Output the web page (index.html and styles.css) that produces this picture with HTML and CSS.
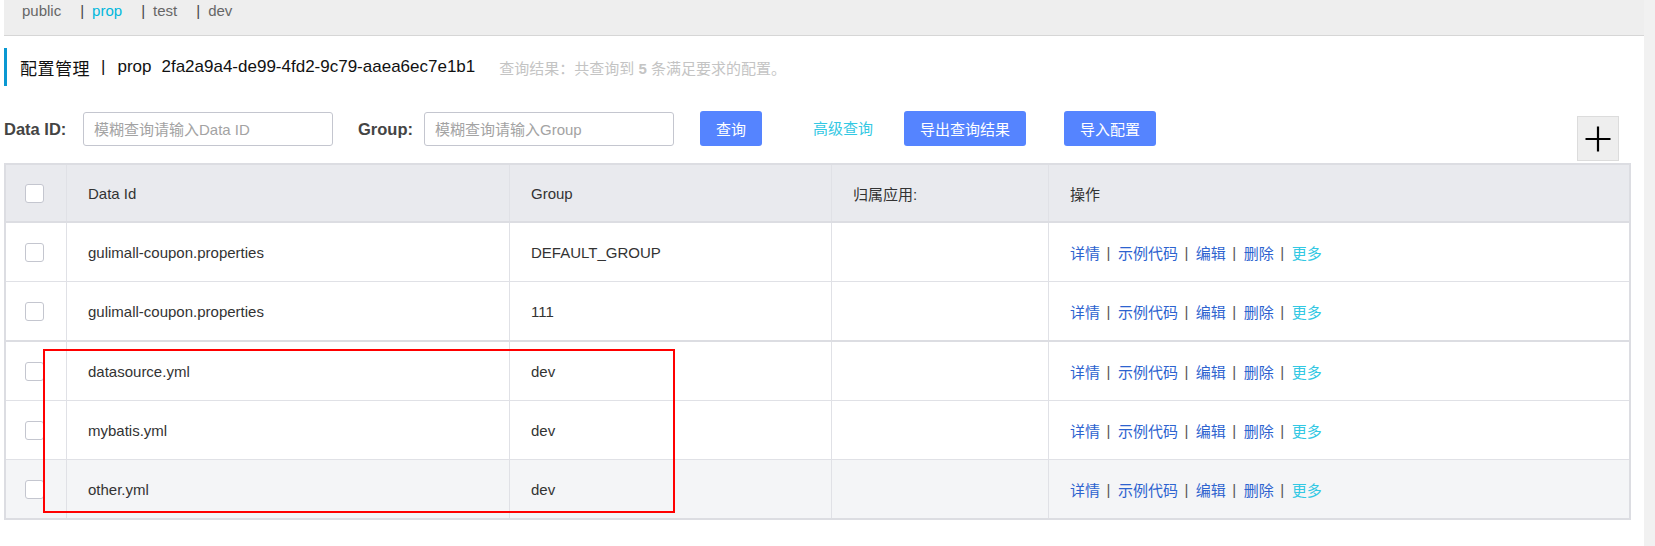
FILE: index.html
```html
<!DOCTYPE html>
<html lang="zh-CN">
<head>
<meta charset="utf-8">
<title>配置管理</title>
<link rel="stylesheet" href="styles.css">
</head>
<body>
<div class="page">
  <div class="main">
    <div class="topbar">
      <span class="tab">public</span>
      <span class="tab"><span class="tab-sep">|</span><span class="tab-active">prop</span></span>
      <span class="tab"><span class="tab-sep">|</span>test</span>
      <span class="tab"><span class="tab-sep">|</span>dev</span>
    </div>
    <div class="content">
      <div class="title">
        <span class="title-main">配置管理</span>
        <span class="title-sep">|</span>
        <span class="title-ns">prop</span>
        <span class="title-id">2fa2a9a4-de99-4fd2-9c79-aaea6ec7e1b1</span>
        <span class="result">查询结果：共查询到 <b>5</b> 条满足要求的配置。</span>
      </div>

      <div class="filters">
        <label class="f-label f-label-id">Data ID:</label>
        <input class="f-input" type="text" placeholder="模糊查询请输入Data ID">
        <label class="f-label f-label-group">Group:</label>
        <input class="f-input" type="text" placeholder="模糊查询请输入Group">
        <button class="btn btn-query">查询</button>
        <a class="adv-link">高级查询</a>
        <button class="btn btn-export">导出查询结果</button>
        <button class="btn btn-import">导入配置</button>
        <button class="plus-btn" aria-label="新建">
          <svg width="26" height="26" viewBox="0 0 26 26"><path d="M0.5 13 H25.5 M13 0.5 V25.5" stroke="#000" stroke-width="2.2" fill="none"/></svg>
        </button>
      </div>

      <div class="table">
        <div class="row head">
          <div class="cell cell-check"><span class="checkbox"></span></div>
          <div class="cell">Data Id</div>
          <div class="cell">Group</div>
          <div class="cell">归属应用:</div>
          <div class="cell cell-last">操作</div>
        </div>
        <div class="row">
          <div class="cell cell-check"><span class="checkbox"></span></div>
          <div class="cell">gulimall-coupon.properties</div>
          <div class="cell">DEFAULT_GROUP</div>
          <div class="cell"></div>
          <div class="cell cell-last"><a class="act">详情</a><span class="act-sep">|</span><a class="act">示例代码</a><span class="act-sep">|</span><a class="act">编辑</a><span class="act-sep">|</span><a class="act">删除</a><span class="act-sep">|</span><a class="act act-more">更多</a></div>
        </div>
        <div class="row row-thick">
          <div class="cell cell-check"><span class="checkbox"></span></div>
          <div class="cell">gulimall-coupon.properties</div>
          <div class="cell">111</div>
          <div class="cell"></div>
          <div class="cell cell-last"><a class="act">详情</a><span class="act-sep">|</span><a class="act">示例代码</a><span class="act-sep">|</span><a class="act">编辑</a><span class="act-sep">|</span><a class="act">删除</a><span class="act-sep">|</span><a class="act act-more">更多</a></div>
        </div>
        <div class="row">
          <div class="cell cell-check"><span class="checkbox"></span></div>
          <div class="cell">datasource.yml</div>
          <div class="cell">dev</div>
          <div class="cell"></div>
          <div class="cell cell-last"><a class="act">详情</a><span class="act-sep">|</span><a class="act">示例代码</a><span class="act-sep">|</span><a class="act">编辑</a><span class="act-sep">|</span><a class="act">删除</a><span class="act-sep">|</span><a class="act act-more">更多</a></div>
        </div>
        <div class="row">
          <div class="cell cell-check"><span class="checkbox"></span></div>
          <div class="cell">mybatis.yml</div>
          <div class="cell">dev</div>
          <div class="cell"></div>
          <div class="cell cell-last"><a class="act">详情</a><span class="act-sep">|</span><a class="act">示例代码</a><span class="act-sep">|</span><a class="act">编辑</a><span class="act-sep">|</span><a class="act">删除</a><span class="act-sep">|</span><a class="act act-more">更多</a></div>
        </div>
        <div class="row row-hover row-last">
          <div class="cell cell-check"><span class="checkbox"></span></div>
          <div class="cell">other.yml</div>
          <div class="cell">dev</div>
          <div class="cell"></div>
          <div class="cell cell-last"><a class="act">详情</a><span class="act-sep">|</span><a class="act">示例代码</a><span class="act-sep">|</span><a class="act">编辑</a><span class="act-sep">|</span><a class="act">删除</a><span class="act-sep">|</span><a class="act act-more">更多</a></div>
        </div>
        <div class="highlight"></div>
      </div>
    </div>
  </div>
  <div class="scroll-track"></div>
</div>
</body>
</html>
```

FILE: styles.css
```css
* { box-sizing: border-box; }

html, body {
  margin: 0;
  padding: 0;
  background: #fff;
}

body {
  font-family: "Liberation Sans", "Noto Sans CJK SC", Arial, sans-serif;
  font-size: 15px;
  color: #333;
  width: 1655px;
  height: 546px;
  overflow: hidden;
}

.page {
  display: flex;
  height: 546px;
}

.main {
  flex: 1;
  min-width: 0;
}

.scroll-track {
  width: 11px;
  background: #f1f1f1;
}

/* ---- namespace tabs ---- */
.topbar {
  margin-left: 4px;
  height: 36px;
  background: #eeeeee;
  border-bottom: 1px solid #d6d6d6;
  padding-left: 18px;
  display: flex;
  align-items: flex-start;
  line-height: 22px;
  font-size: 15px;
  color: #666;
}

.tab {
  margin-right: 19px;
}

.tab-sep {
  color: #444;
  margin-right: 8px;
}

.tab-active {
  color: #00b7dc;
}

/* ---- content ---- */
.content {
  padding: 0 13px 0 4px;
}

.title {
  margin-top: 12px;
  height: 38px;
  border-left: 3px solid #0a98d2;
  padding-left: 13px;
  display: flex;
  align-items: center;
  font-size: 17px;
  color: #111;
  white-space: nowrap;
}

.title-main {
  letter-spacing: 0.5px;
}

.title-sep {
  margin-left: 11px;
}

.title-ns {
  margin-left: 12px;
}

.title-id {
  margin-left: 10px;
}

.result {
  margin-left: 24px;
  font-size: 15px;
  color: #c4c4c4;
}

.result b {
  font-weight: bold;
}

/* ---- filters ---- */
.filters {
  margin-top: 25px;
  height: 50px;
  margin-bottom: 2px;
  display: flex;
  align-items: flex-start;
}

.f-label {
  margin-top: 1px;
  height: 34px;
  line-height: 34px;
  font-weight: bold;
  font-size: 16.5px;
  color: #444;
  white-space: nowrap;
}

.f-label-id {
  width: 79px;
}

.f-label-group {
  margin-left: 25px;
  width: 66px;
}

.f-input {
  margin-top: 1px;
  width: 250px;
  height: 34px;
  border: 1px solid #c4c6cf;
  border-radius: 3px;
  padding: 0 10px;
  font-family: "Liberation Sans", "Noto Sans CJK SC", Arial, sans-serif;
  font-size: 15px;
  color: #333;
  outline: none;
  background: #fff;
}

.f-input::placeholder {
  color: #a3a3a3;
}

.btn {
  height: 35px;
  border: none;
  border-radius: 3px;
  background: #5584ff;
  color: #fff;
  font-family: "Liberation Sans", "Noto Sans CJK SC", Arial, sans-serif;
  font-size: 15px;
  padding: 0 16px;
  white-space: nowrap;
  cursor: pointer;
}

.btn-query {
  margin-left: 26px;
  width: 62px;
}

.adv-link {
  margin-left: 51px;
  height: 35px;
  line-height: 35px;
  color: #33c8e3;
  font-size: 15px;
  white-space: nowrap;
  cursor: pointer;
}

.btn-export {
  margin-left: 31px;
  width: 122px;
}

.btn-import {
  margin-left: 38px;
  width: 92px;
}

.plus-btn {
  margin-left: auto;
  margin-right: 12px;
  margin-top: 5px;
  width: 42px;
  height: 45px;
  background: #eeeeee;
  border: 1px solid #dcdcdc;
  padding: 0;
  display: flex;
  align-items: center;
  justify-content: center;
}

.plus-btn svg {
  display: block;
}

/* ---- table ---- */
.table {
  position: relative;
  border: 2px solid #dcdde2;
}

.row {
  display: grid;
  grid-template-columns: 61px 443px 322px 217px 1fr;
  height: 59px;
  border-bottom: 1px solid #e0e1e6;
  background: #fff;
}

.row.head {
  height: 58px;
  border-bottom: 2px solid #dcdde2;
  background: #e9eaee;
}

.row.row-thick {
  height: 60px;
  border-bottom: 2px solid #dcdde2;
}

.row.row-hover {
  background: #f4f5f7;
}

.row.row-last {
  height: 58px;
  border-bottom: none;
}

.cell {
  display: flex;
  align-items: center;
  padding-left: 21px;
  border-right: 1px solid #e0e1e6;
  white-space: nowrap;
  overflow: hidden;
  color: #333;
}

.cell-check {
  padding-left: 19px;
}

.cell-last {
  border-right: none;
}

.checkbox {
  display: block;
  width: 19px;
  height: 19px;
  border: 1px solid #c4c6cf;
  border-radius: 3px;
  background: #fff;
}

.act {
  color: #2d63cf;
  cursor: pointer;
}

.act-more {
  color: #33c8e3;
}

.act-sep {
  color: #555;
  margin: 0 7.5px 0 6.5px;
}

.highlight {
  position: absolute;
  left: 37px;
  top: 184px;
  width: 632px;
  height: 164px;
  border: 2px solid #f00;
  pointer-events: none;
}
```
